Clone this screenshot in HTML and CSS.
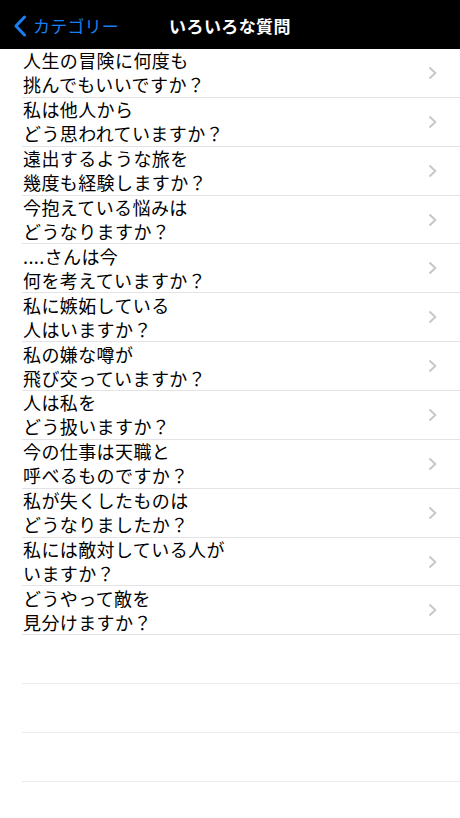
FILE: index.html
```html
<!DOCTYPE html>
<html lang="ja">

<head>
    <meta charset="UTF-8">
    <meta name="viewport" content="width=device-width, initial-scale=1.0">
    <title>いろいろな質問</title>
    <link rel="stylesheet" href="styles.css">
</head>

<body>

    <div id="nav-bar">
        <a class="back" href="#">
            <svg class="back-icon" width="14" height="22" viewBox="0 0 14 22">
                <path d="M11.5 2 L3 11 L11.5 20" fill="none" stroke="#1a7ff2" stroke-width="3" stroke-linecap="round" stroke-linejoin="round" />
            </svg>
            <span>カテゴリー</span>
        </a>
        <h1 class="title">いろいろな質問</h1>
    </div>

    <ul id="question-list">
        <li class="row"><p>人生の冒険に何度も<br>挑んでもいいですか？</p><svg class="chevron" width="9" height="14" viewBox="0 0 9 14"><path d="M1.5 1.5 L7.3 7 L1.5 12.5" /></svg></li>
        <li class="row"><p>私は他人から<br>どう思われていますか？</p><svg class="chevron" width="9" height="14" viewBox="0 0 9 14"><path d="M1.5 1.5 L7.3 7 L1.5 12.5" /></svg></li>
        <li class="row"><p>遠出するような旅を<br>幾度も経験しますか？</p><svg class="chevron" width="9" height="14" viewBox="0 0 9 14"><path d="M1.5 1.5 L7.3 7 L1.5 12.5" /></svg></li>
        <li class="row"><p>今抱えている悩みは<br>どうなりますか？</p><svg class="chevron" width="9" height="14" viewBox="0 0 9 14"><path d="M1.5 1.5 L7.3 7 L1.5 12.5" /></svg></li>
        <li class="row"><p>....さんは今<br>何を考えていますか？</p><svg class="chevron" width="9" height="14" viewBox="0 0 9 14"><path d="M1.5 1.5 L7.3 7 L1.5 12.5" /></svg></li>
        <li class="row"><p>私に嫉妬している<br>人はいますか？</p><svg class="chevron" width="9" height="14" viewBox="0 0 9 14"><path d="M1.5 1.5 L7.3 7 L1.5 12.5" /></svg></li>
        <li class="row"><p>私の嫌な噂が<br>飛び交っていますか？</p><svg class="chevron" width="9" height="14" viewBox="0 0 9 14"><path d="M1.5 1.5 L7.3 7 L1.5 12.5" /></svg></li>
        <li class="row"><p>人は私を<br>どう扱いますか？</p><svg class="chevron" width="9" height="14" viewBox="0 0 9 14"><path d="M1.5 1.5 L7.3 7 L1.5 12.5" /></svg></li>
        <li class="row"><p>今の仕事は天職と<br>呼べるものですか？</p><svg class="chevron" width="9" height="14" viewBox="0 0 9 14"><path d="M1.5 1.5 L7.3 7 L1.5 12.5" /></svg></li>
        <li class="row"><p>私が失くしたものは<br>どうなりましたか？</p><svg class="chevron" width="9" height="14" viewBox="0 0 9 14"><path d="M1.5 1.5 L7.3 7 L1.5 12.5" /></svg></li>
        <li class="row"><p>私には敵対している人が<br>いますか？</p><svg class="chevron" width="9" height="14" viewBox="0 0 9 14"><path d="M1.5 1.5 L7.3 7 L1.5 12.5" /></svg></li>
        <li class="row"><p>どうやって敵を<br>見分けますか？</p><svg class="chevron" width="9" height="14" viewBox="0 0 9 14"><path d="M1.5 1.5 L7.3 7 L1.5 12.5" /></svg></li>
        <li class="row empty"></li>
        <li class="row empty"></li>
        <li class="row empty"></li>
    </ul>

</body>

</html>
```

FILE: styles.css
```css
* {
    margin: 0;
    padding: 0;
    box-sizing: border-box;
}

ul {
    list-style: none;
}

body {
    background: #fff;
    font-family: "Noto Sans CJK JP", "Noto Sans", sans-serif;
    color: #000;
}

#nav-bar {
    height: 49px;
    background: #000;
    display: flex;
    align-items: center;
    justify-content: center;
    position: relative;
}

#nav-bar .back {
    position: absolute;
    left: 13px;
    top: 0;
    height: 49px;
    display: flex;
    align-items: center;
    gap: 6px;
    color: #1a7ff2;
    text-decoration: none;
    font-size: 17px;
    letter-spacing: 0.2px;
}

.back-icon {
    margin-top: 3px;
}

.back span {
    margin-top: 2px;
}

.title {
    color: #fff;
    font-size: 17px;
    font-weight: bold;
    letter-spacing: 0.4px;
    margin-top: 1px;
}

#question-list {
    padding-left: 22px;
}

.row {
    height: 48.86px;
    border-bottom: 1px solid #e3e3e6;
    display: flex;
    align-items: center;
    justify-content: space-between;
    padding-right: 23px;
}

.row p {
    font-size: 18px;
    line-height: 24px;
    letter-spacing: 0.4px;
    padding-left: 1px;
    margin-top: -1px;
}

.chevron path {
    fill: none;
    stroke: #c7c7cc;
    stroke-width: 2;
}

.row.empty {
    border-bottom-color: #ececee;
}
```
